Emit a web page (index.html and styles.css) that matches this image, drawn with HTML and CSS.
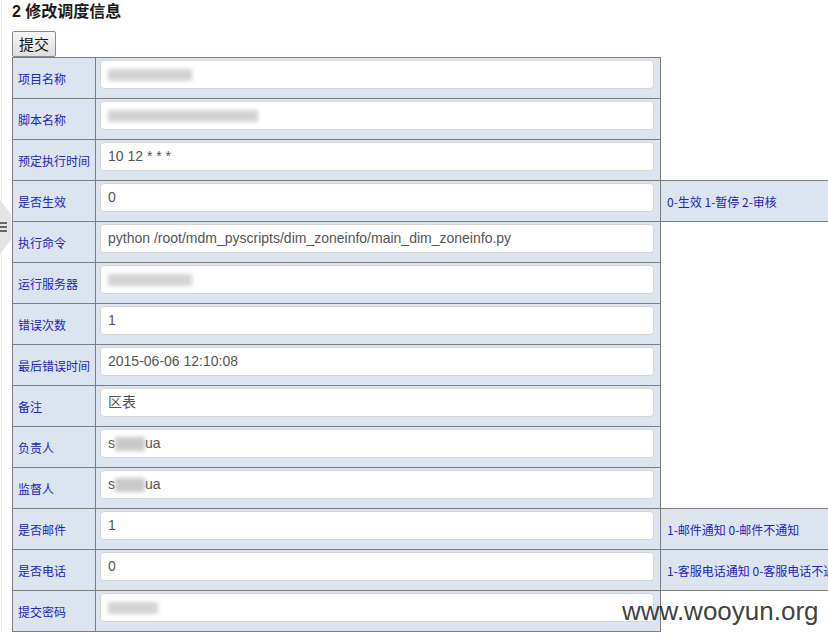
FILE: index.html
```html
<!DOCTYPE html>
<html>
<head>
<meta charset="utf-8">
<link rel="stylesheet" href="styles.css">
</head>
<body>
<div class="page">
  <h3 class="title">2 修改调度信息</h3>
  <button class="btn">提交</button>
  <table class="form">
    <colgroup><col class="c1"><col class="c2"><col class="c3"></colgroup>
    <tr><td class="label">项目名称</td><td class="field"><div class="input"><span class="blur w90"></span></div></td></tr>
    <tr><td class="label">脚本名称</td><td class="field"><div class="input"><span class="blur w150"></span></div></td></tr>
    <tr><td class="label">预定执行时间</td><td class="field"><div class="input">10 12 * * *</div></td></tr>
    <tr><td class="label">是否生效</td><td class="field"><div class="input">0</div></td><td class="note">0-生效 1-暂停 2-审核</td></tr>
    <tr><td class="label">执行命令</td><td class="field"><div class="input">python /root/mdm_pyscripts/dim_zoneinfo/main_dim_zoneinfo.py</div></td></tr>
    <tr><td class="label">运行服务器</td><td class="field"><div class="input"><span class="blur w90"></span></div></td></tr>
    <tr><td class="label">错误次数</td><td class="field"><div class="input">1</div></td></tr>
    <tr><td class="label">最后错误时间</td><td class="field"><div class="input">2015-06-06 12:10:08</div></td></tr>
    <tr><td class="label">备注</td><td class="field"><div class="input">区表</div></td></tr>
    <tr><td class="label">负责人</td><td class="field"><div class="input">s<span class="blur w30 inl"></span>ua</div></td></tr>
    <tr><td class="label">监督人</td><td class="field"><div class="input">s<span class="blur w30 inl"></span>ua</div></td></tr>
    <tr><td class="label">是否邮件</td><td class="field"><div class="input">1</div></td><td class="note">1-邮件通知 0-邮件不通知</td></tr>
    <tr><td class="label">是否电话</td><td class="field"><div class="input">0</div></td><td class="note">1-客服电话通知 0-客服电话不通知</td></tr>
    <tr><td class="label">提交密码</td><td class="field"><div class="input"><span class="blur w50"></span></div></td></tr>
  </table>
</div>
<div class="side-tab">
  <svg width="12" height="60" viewBox="0 0 12 60">
    <polygon points="0,4 11,18 11,44 0,58" fill="#e4e4e4"/>
    <rect x="0" y="26" width="7" height="2" fill="#666"/>
    <rect x="0" y="30" width="7" height="2" fill="#666"/>
    <rect x="0" y="34" width="7" height="2" fill="#666"/>
  </svg>
</div>
<div class="watermark">www.wooyun.org</div>
</body>
</html>
```
FILE: styles.css
```css
html, body {
  margin: 0;
  padding: 0;
  overflow: hidden;
  background: #fff;
}
body {
  width: 828px;
  height: 643px;
  position: relative;
  font-family: "Liberation Sans", "Noto Sans CJK SC", sans-serif;
}
.page {
  padding-left: 10px;
  border-left: 1px solid #eeeeee;
  margin-left: 1px;
}
.title {
  margin: 0;
  padding-top: 1px;
  height: 30px;
  font-size: 16px;
  font-weight: bold;
  color: #1a1a1a;
  line-height: 21px;
  font-family: "Liberation Sans", "Noto Sans CJK SC", sans-serif;
}
.btn {
  display: block;
  margin: 0;
  height: 26px;
  padding: 0 6px;
  font-size: 15px;
  font-family: "Noto Sans CJK SC", sans-serif;
  color: #111;
  background: linear-gradient(#f6f6f6, #dedede);
  border: 1px solid #8a8a8a;
  border-radius: 2px;
  line-height: 22px;
}
.form {
  border-collapse: collapse;
  table-layout: fixed;
  width: 908px;
  margin-top: 0;
}
.c1 { width: 83px; }
.c2 { width: 565px; }
.c3 { width: 260px; }
.form td {
  border: 1px solid #7d7d7d;
  height: 38px;
  padding: 0;
  background: #dce4f0;
  font-size: 12px;
  line-height: 16px;
  color: #2424b8;
  font-family: "Noto Sans CJK SC", sans-serif;
}
.form td.label {
  padding: 2px 0 0 5px;
  vertical-align: middle;
}
.form td.field {
  vertical-align: top;
  padding: 2px 0 0 4px;
}
.form td.note {
  padding: 2px 0 0 6px;
  white-space: nowrap;
  vertical-align: middle;
}
.input {
  box-sizing: border-box;
  width: 554px;
  height: 29px;
  background: #fff;
  border: 1px solid #d6d6d6;
  border-radius: 4px;
  padding: 0 7px;
  font-family: "Liberation Sans", "Noto Sans CJK SC", sans-serif;
  font-size: 14px;
  color: #555;
  line-height: 27px;
  white-space: nowrap;
  overflow: hidden;
}
.blur {
  display: inline-block;
  height: 12px;
  vertical-align: middle;
  background: #c8c8c8;
  filter: blur(2px);
  opacity: 0.8;
}
.blur.inl { background: #bbbbbb; height: 14px; }
.w30 { width: 30px; }
.w50 { width: 50px; }
.w90 { width: 84px; }
.w150 { width: 150px; }
.side-tab {
  position: absolute;
  left: 0;
  top: 196px;
}
.side-tab svg { display: block; }
.watermark {
  position: absolute;
  left: 622px;
  top: 596px;
  font-family: "Liberation Sans", sans-serif;
  font-size: 26px;
  color: rgba(40, 40, 40, 0.9);
}
```
